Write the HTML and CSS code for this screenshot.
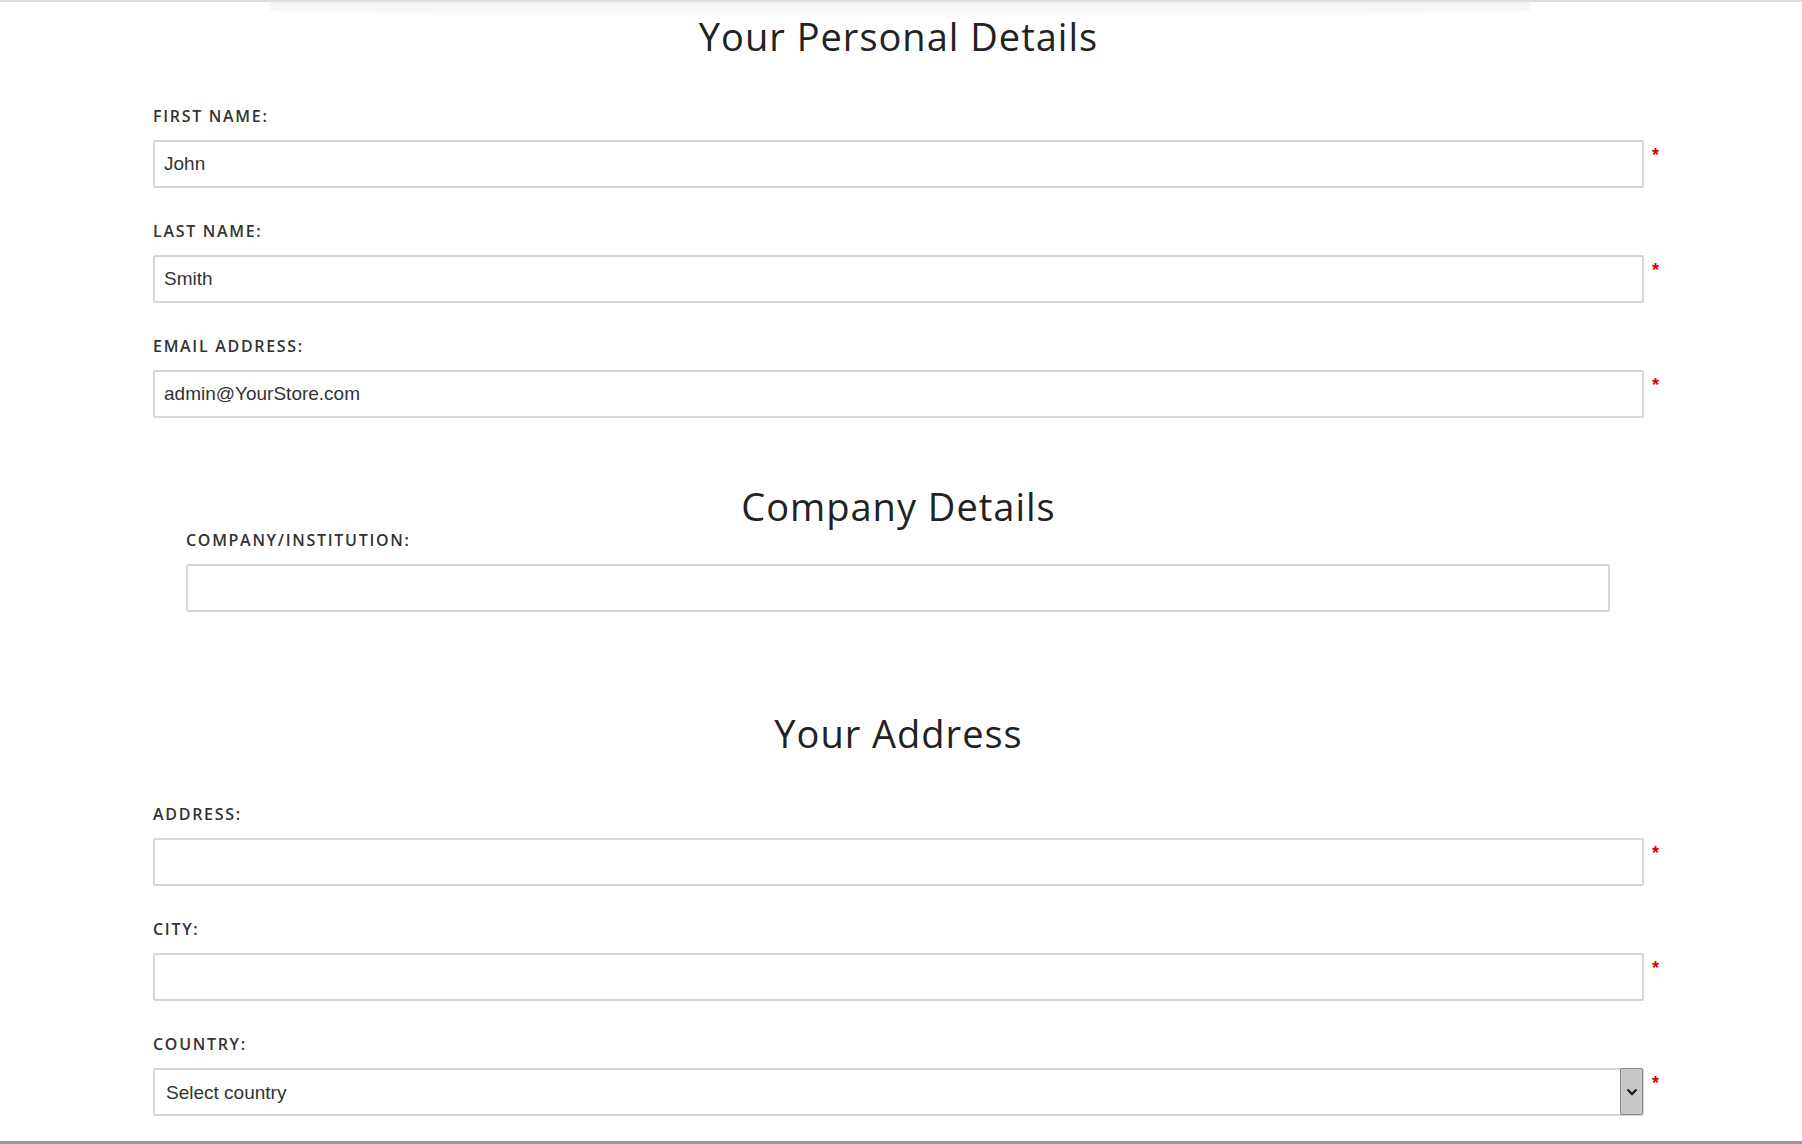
FILE: index.html
```html
<!DOCTYPE html>
<html lang="en">
<head>
    <meta charset="UTF-8">
    <meta name="viewport" content="width=device-width, initial-scale=1.0">
    <title>Register Account</title>
    <link rel="stylesheet" href="styles.css">
</head>
<body>

    <div class="top-edge"></div>
    <div class="top-shade"></div>

    <form class="register">
        <h2 class="title first">Your Personal Details</h2>

        <div class="field">
            <label for="firstname">First Name:</label>
            <div class="row">
                <input type="text" id="firstname" value="John">
                <span class="required">*</span>
            </div>
        </div>

        <div class="field">
            <label for="lastname">Last Name:</label>
            <div class="row">
                <input type="text" id="lastname" value="Smith">
                <span class="required">*</span>
            </div>
        </div>

        <div class="field">
            <label for="email">Email Address:</label>
            <div class="row">
                <input type="text" id="email" value="admin@YourStore.com">
                <span class="required">*</span>
            </div>
        </div>

        <h2 class="title company-title">Company Details</h2>

        <div class="field company">
            <label for="company">Company/Institution:</label>
            <div class="row">
                <input type="text" id="company" value="">
            </div>
        </div>

        <h2 class="title address-title">Your Address</h2>

        <div class="field">
            <label for="address">Address:</label>
            <div class="row">
                <input type="text" id="address" value="">
                <span class="required">*</span>
            </div>
        </div>

        <div class="field">
            <label for="city">City:</label>
            <div class="row">
                <input type="text" id="city" value="">
                <span class="required">*</span>
            </div>
        </div>

        <div class="field">
            <label for="country">Country:</label>
            <div class="row">
                <div class="select-wrap">
                    <select id="country">
                        <option>Select country</option>
                    </select>
                    <span class="select-arrow">
                        <svg width="12" height="8" viewBox="0 0 12 8"><path d="M1.5 1.5 L6 6 L10.5 1.5" fill="none" stroke="#222" stroke-width="2.4"/></svg>
                    </span>
                </div>
                <span class="required">*</span>
            </div>
        </div>
    </form>

    <div class="bottom-edge"></div>

</body>
</html>
```

FILE: styles.css
```css
* {
    box-sizing: border-box;
    margin: 0;
    padding: 0;
}
html, body {
    height: 100%;
    overflow: hidden;
}
body {
    font-family: "Liberation Sans", Arial, sans-serif;
    background-color: white;
    color: #333;
    position: relative;
}
.top-edge {
    height: 2px;
    background-color: #dcdcdc;
}
.top-shade {
    height: 16px;
    margin: 0 272px 0 270px;
    background: linear-gradient(to bottom, #f1f1f1, #ffffff);
    border-radius: 0 0 50% 50%;
}
.register {
    width: 1530px;
    margin-left: 153px;
}
.title {
    font-family: "Open Sans", sans-serif;
    font-weight: 400;
    font-size: 38px;
    letter-spacing: 1px;
    line-height: 44px;
    color: #222;
    text-align: center;
    width: 1491px;
}
.title.first {
    margin-top: -4px;
    margin-bottom: 48px;
}
.title.company-title {
    margin-top: 66px;
    margin-bottom: 2px;
}
.title.address-title {
    margin-top: 99px;
    margin-bottom: 49px;
}
.field {
    margin-bottom: 33px;
}
.field label {
    display: block;
    font-family: "Open Sans", sans-serif;
    font-size: 16px;
    font-weight: 600;
    letter-spacing: 1.7px;
    text-transform: uppercase;
    line-height: 20px;
    color: #333;
    margin-bottom: 14px;
}
.row {
    display: flex;
    align-items: flex-start;
}
input, select {
    width: 1491px;
    height: 48px;
    padding: 0 9px;
    border: 2px solid #d6d6d6;
    border-radius: 2px;
    font-family: "Liberation Sans", Arial, sans-serif;
    font-size: 19px;
    color: #333;
    background-color: white;
    outline: none;
}
.required {
    color: #d40000;
    font-size: 18px;
    font-weight: bold;
    line-height: 18px;
    margin: 6px 0 0 8px;
}
.company {
    padding-left: 33px;
}
.company input {
    width: 1424px;
}
.select-wrap {
    position: relative;
    width: 1491px;
    height: 48px;
}
.select-wrap select {
    appearance: none;
    -webkit-appearance: none;
    padding-left: 11px;
}
.select-arrow {
    position: absolute;
    right: 1px;
    top: 0;
    width: 23px;
    height: 47px;
    background-color: #c9c9c9;
    border: 1px solid #8a8a8a;
    border-radius: 2px;
    display: flex;
    align-items: center;
    justify-content: center;
}
.bottom-edge {
    position: absolute;
    left: 0;
    right: 0;
    bottom: 0;
    height: 3px;
    background-color: #9a9a9a;
}
```
